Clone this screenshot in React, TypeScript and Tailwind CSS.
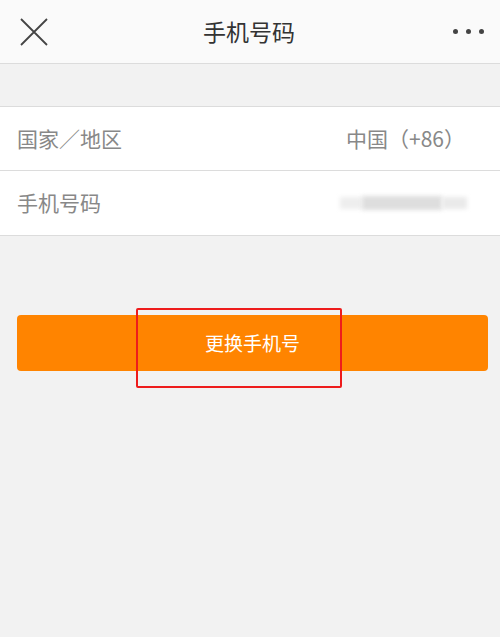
const font = { fontFamily: '"Noto Sans CJK SC", "Noto Sans", sans-serif' };

export default function App() {
  return (
    <div className="min-h-[637px] w-[500px] bg-[#f2f2f2]" style={font}>
      {/* Header */}
      <div className="flex h-[64px] items-center justify-between border-b border-[#dcdcdc] bg-[#fafafa] pl-[20px] pr-[16px]">
        <svg width="28" height="28" viewBox="0 0 28 28" className="text-[#444]">
          <path d="M1 1 L27 27 M27 1 L1 27" stroke="currentColor" strokeWidth="1.8" fill="none" />
        </svg>
        <div className="text-[23px] text-[#333]">手机号码</div>
        <div className="flex w-[34px] items-center justify-end gap-[8px]">
          <span className="h-[5px] w-[5px] rounded-full bg-[#444]" />
          <span className="h-[5px] w-[5px] rounded-full bg-[#444]" />
          <span className="h-[5px] w-[5px] rounded-full bg-[#444]" />
        </div>
      </div>

      {/* Rows */}
      <div className="mt-[42px] border-y border-[#dcdcdc] bg-white">
        <div className="flex h-[64px] items-center justify-between border-b border-[#dcdcdc] pl-[17px] pr-[35px]">
          <span className="text-[21px] text-[#888]">国家／地区</span>
          <span className="text-[21px] text-[#888]">中国（+86）</span>
        </div>
        <div className="flex h-[64px] items-center justify-between pl-[17px] pr-[33px]">
          <span className="text-[21px] text-[#888]">手机号码</span>
          <div className="flex h-[18px] w-[127px] items-center">
            <div className="h-[12px] w-[22px] bg-[#eeeeee] blur-[2px]" />
            <div className="h-[14px] w-[80px] bg-[#dedede] blur-[2px]" />
            <div className="h-[12px] w-[25px] bg-[#eaeaea] blur-[2px]" />
          </div>
        </div>
      </div>

      {/* Button */}
      <div className="relative mt-[79px] pl-[17px] pr-[12px]">
        <button className="flex h-[56px] w-full items-center justify-center rounded-[4px] bg-[#ff8400] text-[19px] text-white">
          更换手机号
        </button>
        <div className="absolute left-[136px] top-[-7px] h-[80px] w-[206px] rounded-[2px] border-2 border-[#ee1c1c]" />
      </div>
    </div>
  );
}
